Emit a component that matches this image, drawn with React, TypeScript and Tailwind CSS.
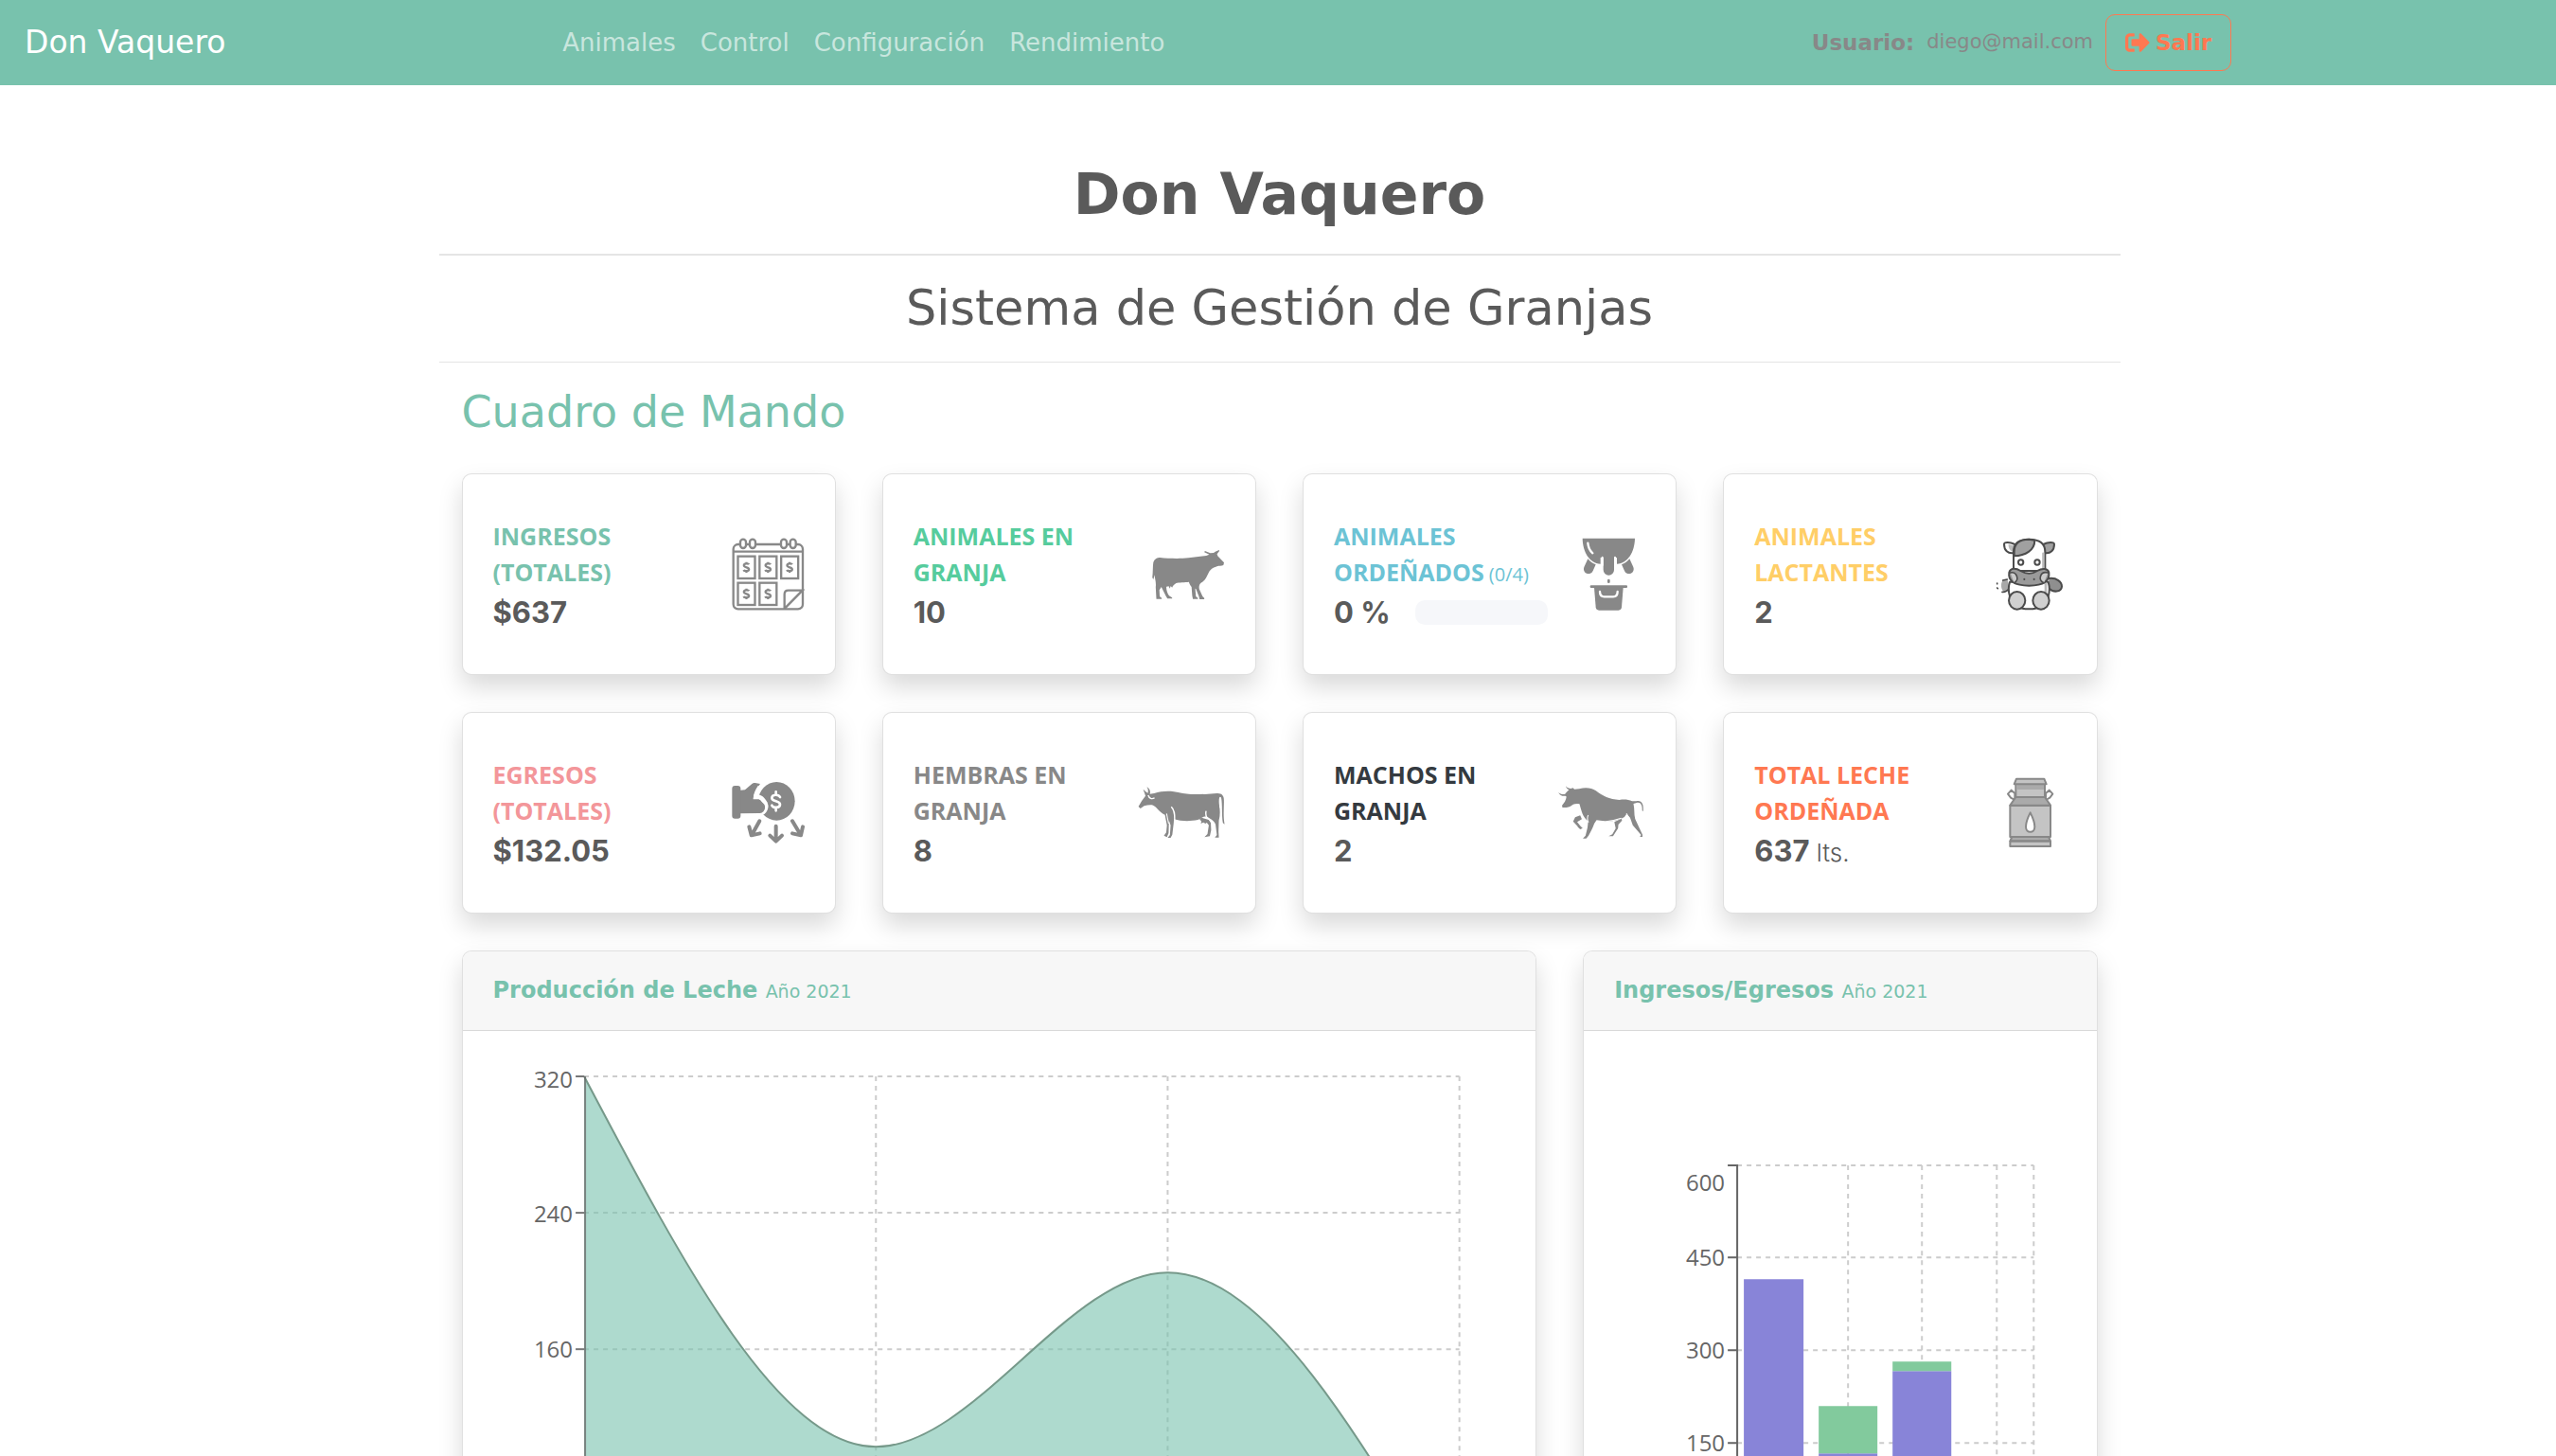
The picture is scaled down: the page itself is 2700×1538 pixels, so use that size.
import React from "react";
import { FaSignOutAlt } from "react-icons/fa";

const NAV = ["Animales", "Control", "Configuración", "Rendimiento"];

const DOLLAR = "M8 -9C6 -13 -8 -13 -8 -6C-8 1 8 -1 8 6C8 13 -7 13 -9 8M0 -17V-12M0 12V17";

function CalendarIcon() {
  const cells = [
    [114.5, 149],
    [183, 149],
    [251.5, 149],
    [114.5, 233],
    [183, 233],
  ];
  return (
    <svg viewBox="68 55 231 231" className="size-[77px]" fill="none" stroke="#888" strokeWidth={7} aria-hidden="true">
      <rect x={73} y={76} width={220} height={205} rx={15} />
      <path d="M73 99H293" />
      {[104, 134, 233, 262].map((x) => (
        <rect key={x} x={x - 9} y={60} width={18} height={28} rx={9} fill="#fff" />
      ))}
      {cells.map(([x, y]) => (
        <g key={`${x}-${y}`} transform={`translate(${x} ${y})`}>
          <rect x={-27} y={-35} width={54} height={70} />
          <path d={DOLLAR} />
        </g>
      ))}
      <path d="M235 280V234Q235 222 247 222H292L236 279" fill="#fff" />
    </svg>
  );
}

function CowIcon() {
  return (
    <svg viewBox="81 -6 231 231" className="size-[77px]" fill="#888" aria-hidden="true">
      <path
        transform="scale(1.062 1)"
        d="M276 56L291 73L289 81C283 84 275 82 270 85C255 90 250 96 245 105C238 120 235 130 222 137C216 143 216 150 217 157L227 180L232 185V189H218L216 180L207 156L205 155L207 180L213 185V188H198L196 178L194 150C190 145 188 140 186 134C175 136 155 135 148 138C143 142 138 146 136 152L132 147L129 155L126 148L119 149C118 160 122 170 127 178L136 184V187H122L118 180L107 157L104 150L98 160L99 180L105 185V188H89L87 150C89 135 84 125 84 112L80 126L77 120C79 105 78 85 80 72C84 60 92 57 100 57C125 60 160 61 185 58L238 51L247 47L232 40L234 36L250 43L260 42L265 38L276 33L277 36L270 46L272 52Z"
      />
    </svg>
  );
}

function MilkingIcon() {
  return (
    <svg viewBox="62 55 231 231" className="size-[77px]" fill="#888" aria-hidden="true">
      <path d="M94 57H260C259 100 238 136 203 138V118H151V138C116 136 95 100 94 57Z" />
      <path d="M160 110H194V157A17 17 0 0 1 160 157Z" />
      <path d="M157 117V142M197 117V142" stroke="#fff" strokeWidth={6} strokeLinecap="round" />
      <path d="M111 72C112 85 118 97 126 104" stroke="#fff" strokeWidth={7} strokeLinecap="round" fill="none" />
      <path d="M111 122C118 131 127 137 136 140L127 160A15 15 0 0 1 99 148Z" />
      <path d="M243 122C236 131 227 137 218 140L227 160A15 15 0 0 0 255 148Z" />
      <rect x={173} y={186} width={8} height={13} rx={4} />
      <rect x={118} y={206} width={118} height={8} rx={3} />
      <path d="M131 213H223L218 275Q217 285 208 285H146Q137 285 136 275Z" />
      <path d="M149 226Q149 242 163 242H191Q205 242 205 226" stroke="#fff" strokeWidth={7} strokeLinecap="round" fill="none" />
    </svg>
  );
}

function CalfIcon() {
  return (
    <svg viewBox="75 55 231 231" className="size-[77px]" fill="#fff" stroke="#4b4b4b" strokeWidth={6} strokeLinecap="round" strokeLinejoin="round" aria-hidden="true">
      <path d="M142 76C126 68 108 68 108 75C108 95 120 106 138 103" />
      <path d="M122 76C121 88 128 98 138 101V80Z" fill="#bbb" stroke="none" />
      <path d="M232 76C248 68 267 68 267 75C267 95 255 106 237 103" fill="#a0a0a0" />
      <path d="M118 187L104 190C96 200 98 222 108 226C116 227 122 220 126 214" fill="#a8a8a8" stroke="none" />
      <path d="M118 187L104 190M102 227C112 228 120 222 126 214M86 201V199M86 214L88 216" fill="none" strokeWidth={5} />
      <path d="M250 184C275 181 291 195 291 210C289 228 264 230 248 214" fill="#8f8f8f" />
      <path d="M126 195C120 215 122 228 126 240C135 275 160 281 187 281C214 281 240 275 248 240C252 228 254 215 248 195Z" />
      <path d="M240 200V232" stroke="#bbb" strokeWidth={8} />
      <path d="M138 160V100C138 70 155 60 187 60C219 60 238 70 238 100V160Z" />
      <path d="M232 105V155" stroke="#bbb" strokeWidth={7} />
      <path d="M205 63C205 95 175 112 140 113V100C140 72 158 60 187 60Z" fill="#a0a0a0" />
      <path d="M124 165C128 150 145 150 160 160C180 172 195 172 213 160C230 150 247 152 250 165C253 192 235 207 187 207C140 207 120 192 124 165Z" fill="#9a9a9a" />
      <path d="M128 166C148 160 158 190 140 198M247 166C222 160 214 190 234 198" fill="#ccc" strokeWidth={5} />
      <circle cx={161} cy={133} r={8} />
      <circle cx={213} cy={133} r={8} />
      <path d="M172 186V187M203 186V187" />
      <ellipse cx={149} cy={254} rx={26} ry={28} fill="#d0d0d0" />
      <ellipse cx={225} cy={254} rx={26} ry={28} fill="#d0d0d0" />
    </svg>
  );
}

function ExpenseIcon() {
  return (
    <svg viewBox="908 240 231 231" className="size-[77px]" fill="#888" aria-hidden="true">
      <ellipse cx={1050} cy={319} rx={58} ry={61} />
      <path
        d="M936 285L950 283L972 264Q976 260 982 261L998 264C986 280 978 294 980 306H995C1004 308 1008 316 1012 322C1022 336 1014 357 996 357L936 358Z"
        stroke="#fff"
        strokeWidth={14}
      />
      <path d="M930 285L950 283L972 264Q976 260 982 261L998 264C986 280 976 296 976 318H990C1003 320 1016 328 1013 342C1010 353 1004 357 994 357L930 358Z" />
      <path d="M994 272C984 288 980 300 980 308C1000 306 1010 312 1018 326" fill="none" stroke="#fff" strokeWidth={7} />
      <rect x={909} y={270} width={27} height={104} rx={9} />
      <g transform="translate(1048 319)" fill="none" stroke="#fff" strokeWidth={8} strokeLinecap="round">
        <path d="M13 -13C8 -23 -13 -22 -13 -10C-13 2 13 -2 13 10C13 22 -9 23 -13 13M0 -30V-20M0 20V30" />
      </g>
      <g fill="none" stroke="#888" strokeWidth={12} strokeLinecap="round" strokeLinejoin="round">
        <path d="M1048 398V444M1029 428L1048 446L1067 428" />
        <path d="M996 382L972 425M963 400L970 427L997 421" />
        <path d="M1100 382L1126 425M1133 400L1127 427L1100 421" />
      </g>
    </svg>
  );
}

function FemaleCowIcon() {
  return (
    <svg viewBox="28 750 276 231" className="h-[77px] w-[92px]" fill="#888" aria-hidden="true">
      <g transform="scale(1.062 1)">
        <path d="M49 812C46 800 43 795 42 791C48 796 52 801 56 803C58 795 56 788 53 783C61 789 65 797 62 806L75 804C100 795 130 796 150 802C170 808 200 808 235 806L262 804C277 803 283 812 283 824C284 845 280 872 285 902L280 898C276 870 279 840 275 818C270 810 267 820 269 840C272 860 272 875 268 890L267 925L268 944H256L262 936L258 902C252 888 242 884 232 879C222 874 215 884 205 888C185 893 155 893 134 886L133 900L129 935L124 945H115L122 936L124 905L119 890L118 930L113 943L104 938L111 928L113 905L107 872C92 865 85 850 72 842C65 840 55 841 45 844L34 852L28 846L38 828Z" />
        <path d="M210 885L216 881L238 888L244 898L245 920L241 940L225 943L234 933L238 905L232 897L228 900L222 896L214 900L216 893Z" />
        <path d="M126 847C137 858 136 872 136 888M57 810C60 820 68 824 76 818M272 818V850M230 860C228 868 229 874 232 880L243 890" fill="none" stroke="#fff" strokeWidth={4} />
        <path d="M112 868L118 900" fill="none" stroke="#fff" strokeWidth={3} />
      </g>
    </svg>
  );
}

function BullIcon() {
  return (
    <svg viewBox="1362 750 276 231" className="h-[77px] w-[92px]" fill="#888" aria-hidden="true">
      <g transform="scale(1.062 1)">
        <path d="M1283 801C1290 808 1298 808 1304 806L1306 812C1296 814 1287 811 1283 801ZM1305 781C1308 787 1315 789 1321 789L1317 794C1311 792 1306 788 1305 781Z" />
        <path d="M1302 808C1308 798 1316 790 1326 787L1331 791L1345 790C1365 784 1382 787 1395 796C1415 812 1435 824 1465 825C1480 822 1492 824 1503 829L1515 829C1532 825 1538 838 1536 861L1533 859C1534 842 1529 832 1519 833L1507 837C1511 855 1508 868 1512 885L1528 922L1534 935V942H1526L1530 936L1505 905L1497 881L1486 870L1480 879C1460 893 1430 895 1397 889L1390 900C1385 915 1380 925 1373 938L1366 947H1356L1364 938L1370 912L1372 892C1355 880 1352 860 1346 838C1335 835 1328 838 1323 842C1318 848 1305 850 1295 849L1294 842C1300 835 1306 825 1307 815Z" />
        <path d="M1348 874L1333 880L1327 893L1340 908L1344 914H1355L1348 907L1339 895L1353 886ZM1340 910L1348 918L1356 914Z" />
        <path d="M1471 884L1450 895L1454 915L1444 934L1433 940H1446L1461 915L1462 903L1473 890Z" />
        <path d="M1372 873C1368 882 1370 890 1373 896M1486 868L1494 882M1471 883C1455 889 1440 892 1425 893" fill="none" stroke="#fff" strokeWidth={3} />
      </g>
    </svg>
  );
}

function MilkCanIcon() {
  return (
    <svg viewBox="2264 240 231 231" className="size-[77px]" fill="#c4c4c4" stroke="#888" strokeWidth={6} strokeLinejoin="round" aria-hidden="true">
      <path d="M2336 318L2318 308L2309 296L2320 284L2331 294V310M2424 318L2442 308L2451 296L2440 284L2429 294V310" fill="#fff" />
      <path d="M2334 264H2426V306H2334Z" />
      <path d="M2337 267H2423V282H2337Z" fill="#aaa" stroke="none" />
      <path d="M2336 248H2424L2431 265H2329Z" />
      <path d="M2334 306H2426L2444 332H2316Z" fill="#aaa" />
      <path d="M2316 333H2444V432H2316Z" />
      <path d="M2322 432H2438L2444 445H2316Z" fill="#aaa" />
      <path d="M2316 446H2444V462H2316Z" />
      <path d="M2380 355C2370 375 2366 388 2366 400C2366 422 2394 422 2394 400C2394 388 2390 375 2380 355Z" fill="#fff" />
    </svg>
  );
}

type Stat = {
  title: string;
  note?: string;
  value: string;
  unit?: string;
  progress?: number;
  color: string;
  icon: React.ReactNode;
};

const STATS: Stat[] = [
  { title: "INGRESOS (TOTALES)", value: "$637", color: "text-[#78c2ad]", icon: <CalendarIcon /> },
  { title: "ANIMALES EN GRANJA", value: "10", color: "text-[#56cc9d]", icon: <CowIcon /> },
  { title: "ANIMALES ORDEÑADOS", note: "(0/4)", value: "0 %", progress: 0, color: "text-[#6cc3d5]", icon: <MilkingIcon /> },
  { title: "ANIMALES LACTANTES", value: "2", color: "text-[#ffce67]", icon: <CalfIcon /> },
  { title: "EGRESOS (TOTALES)", value: "$132.05", color: "text-[#f3969a]", icon: <ExpenseIcon /> },
  { title: "HEMBRAS EN GRANJA", value: "8", color: "text-[#888888]", icon: <FemaleCowIcon /> },
  { title: "MACHOS EN GRANJA", value: "2", color: "text-[#343a40]", icon: <BullIcon /> },
  { title: "TOTAL LECHE ORDEÑADA", value: "637", unit: "lts.", color: "text-[#ff7851]", icon: <MilkCanIcon /> },
];

function StatCard({ stat }: { stat: Stat }) {
  return (
    <article className="flex items-center gap-[26px] rounded-[10px] border border-black/12 bg-white px-8 py-[46px] shadow-[0_13px_26px_rgba(0,0,0,0.15)]">
      <div className="min-w-0 flex-1">
        <h3 className={`mb-[5px] font-['Open_Sans',sans-serif] text-[25px] leading-[38px] font-bold ${stat.color}`}>
          {stat.title}
          {stat.note && <span className="text-[20px] leading-none font-normal"> {stat.note}</span>}
        </h3>
        <div className="flex items-center gap-[26px]">
          <p className="shrink-0 font-['Inter',sans-serif] text-[31px] leading-[38px] font-bold">
            {stat.value}
            {stat.unit && <span className="text-[26px] leading-none font-light"> {stat.unit}</span>}
          </p>
          {stat.progress !== undefined && (
            <div role="progressbar" aria-label={stat.title} aria-valuenow={stat.progress} className="h-[26px] flex-1 overflow-hidden rounded-[10px] bg-[#f6f7fa]">
              <div className="h-full bg-[#6cc3d5]" style={{ width: `${stat.progress}%` }} />
            </div>
          )}
        </div>
      </div>
      {stat.icon}
    </article>
  );
}

function Panel({ title, children }: { title: string; children: React.ReactNode }) {
  return (
    <section className="overflow-hidden rounded-[10px] border border-black/12 bg-white shadow-[0_13px_26px_rgba(0,0,0,0.15)]">
      <header className="border-b border-black/12 bg-[#f7f7f7] px-8 py-[22px]">
        <h3 className="text-[24px] leading-[39px] font-bold text-[#78c2ad]">
          {title} <span className="text-[19px] leading-none font-normal">Año 2021</span>
        </h3>
      </header>
      <div className="p-8">{children}</div>
    </section>
  );
}

function MilkChart() {
  const curve = "M96 16C199 211 301 407 404 407C507 407 609 223 712 223C815 223 917 399 1020 576";
  return (
    <svg viewBox="0 0 1069 640" className="block w-full" role="img" aria-label="Producción de Leche">
      <g stroke="#ccc" strokeWidth={2} strokeDasharray="5 5">
        {[16, 160, 304, 448, 592].map((y) => (
          <path key={y} d={`M96 ${y}H1020`} />
        ))}
        {[404, 712, 1020].map((x) => (
          <path key={x} d={`M${x} 16V592`} />
        ))}
      </g>
      <path d={`${curve}V592H96Z`} fill="#78c2ad" fillOpacity={0.6} />
      <path d={curve} fill="none" stroke="#76998a" strokeWidth={2} />
      <path d="M97 16V592" stroke="#666" strokeOpacity={0.75} strokeWidth={2} />
      <g stroke="#777" strokeWidth={2}>
        {[16, 160, 304, 448].map((y) => (
          <path key={y} d={`M87 ${y}H96`} />
        ))}
      </g>
      <g className="fill-[#666] font-['Open_Sans',sans-serif] text-[24px]" textAnchor="end">
        <text x={84} y={28}>320</text>
        <text x={84} y={170}>240</text>
        <text x={84} y={313}>160</text>
      </g>
    </svg>
  );
}

function MoneyChart() {
  return (
    <svg viewBox="0 0 477 640" className="block w-full" role="img" aria-label="Ingresos/Egresos">
      <g stroke="#ccc" strokeWidth={2} strokeDasharray="5 5">
        {[110, 207, 305, 403].map((y) => (
          <path key={y} d={`M130 ${y}H443`} />
        ))}
        {[247, 325, 404, 443].map((x) => (
          <path key={x} d={`M${x} 110V501`} />
        ))}
      </g>
      <g fill="#8884d8">
        <path d="M137 230H200V501H137Z" />
        <path d="M216 414H278V501H216Z" />
        <path d="M294 327H356V501H294Z" />
      </g>
      <g fill="#82ca9d">
        <path d="M216 364H278V414H216Z" />
        <path d="M294 317H356V327H294Z" />
      </g>
      <g stroke="#666" strokeWidth={2}>
        <path d="M130 109V501H443M120 110H130M120 207H130M120 305H130M120 403H130" fill="none" />
      </g>
      <g className="fill-[#666] font-['Open_Sans',sans-serif] text-[24px]" textAnchor="end">
        <text x={117} y={137}>600</text>
        <text x={117} y={216}>450</text>
        <text x={117} y={314}>300</text>
        <text x={117} y={412}>150</text>
      </g>
    </svg>
  );
}

export default function App() {
  return (
    <div className="h-screen overflow-hidden bg-white font-['DejaVu_Sans',sans-serif] text-[#5a5a5a]">
      <nav className="flex h-[90px] items-center bg-[#78c2ad] pl-[26px]">
        <a href="#" className="text-[33px] leading-[46px] text-white">
          Don Vaquero
        </a>
        <div className="mx-auto flex w-full max-w-[1776px] items-center pl-0">
          <ul className="flex">
            {NAV.map((item) => (
              <li key={item}>
                <a href="#" className="px-[13px] text-[26px] leading-[38px] text-white/60">
                  {item}
                </a>
              </li>
            ))}
          </ul>
          <div className="ml-auto flex items-center text-[#888]">
            <strong className="text-[23px]">Usuario:</strong>
            <span className="mx-[13px] text-[21px]">diego@mail.com</span>
            <button type="button" className="flex h-[60px] items-center gap-[6px] rounded-[10px] border border-[#ff7851] px-5 text-[23px] font-bold text-[#ff7851]">
              <FaSignOutAlt className="size-[26px]" />
              Salir
            </button>
          </div>
        </div>
      </nav>

      <div className="pl-[3px]">
        <main className="mx-auto max-w-[1776px] pt-[77px]">
          <h1 className="text-center text-[60px] leading-[76px] font-bold">Don Vaquero</h1>
          <hr className="mt-[25px] border-t-2 border-black/10" />
          <h2 className="mt-[25px] text-center text-[51px] leading-[62px]">Sistema de Gestión de Granjas</h2>
          <hr className="mt-[25px] border-black/10" />

          <div className="px-6">
            <h2 className="mt-[25px] mb-[38px] text-[46px] leading-[54px] text-[#78c2ad]">Cuadro de Mando</h2>
            <div className="grid grid-cols-4 gap-x-[49px] gap-y-[39px]">
              {STATS.map((stat) => (
                <StatCard key={stat.title} stat={stat} />
              ))}
            </div>
            <div className="mt-[39px] grid grid-cols-[1135fr_543fr] gap-x-[49px]">
              <Panel title="Producción de Leche">
                <MilkChart />
              </Panel>
              <Panel title="Ingresos/Egresos">
                <MoneyChart />
              </Panel>
            </div>
          </div>
        </main>
      </div>
    </div>
  );
}
